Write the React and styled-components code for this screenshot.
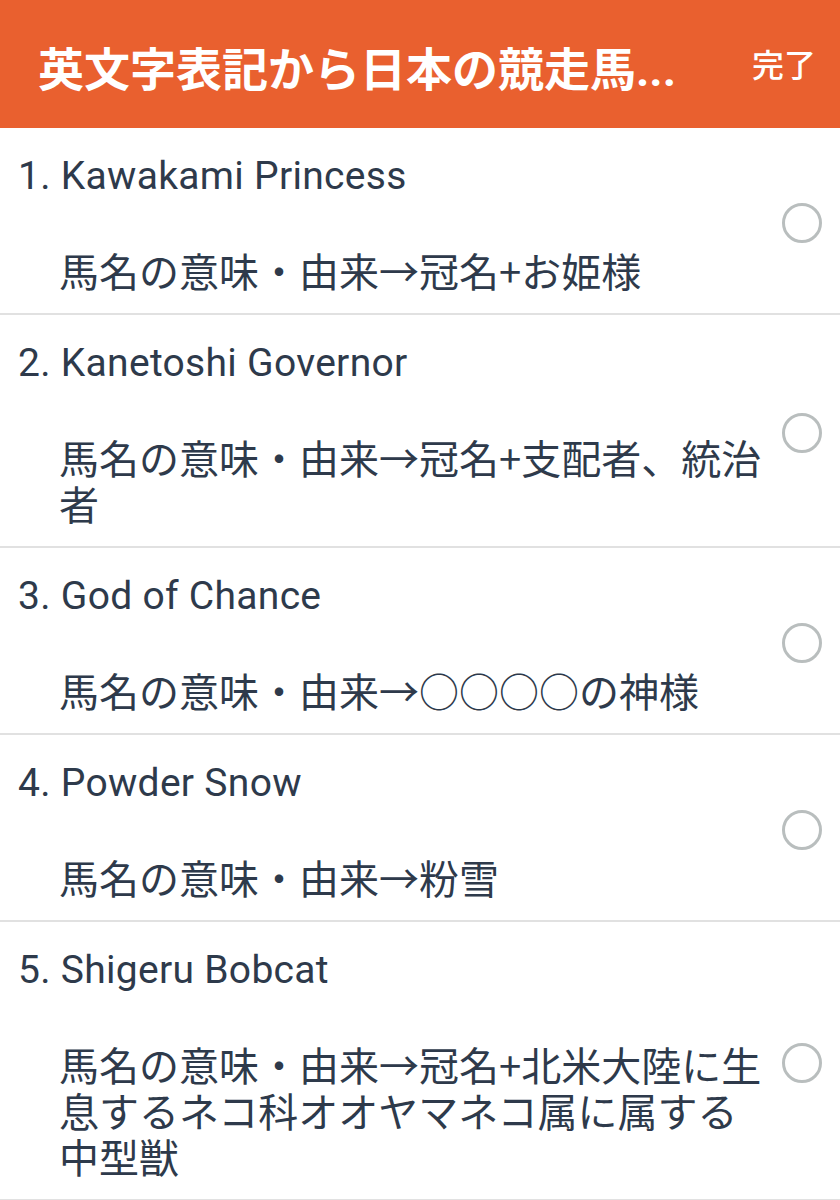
import styled, { createGlobalStyle } from "styled-components";

const GlobalStyle = createGlobalStyle`
  html, body {
    margin: 0;
    padding: 0;
    background: #ffffff;
  }
  body {
    font-family: Roboto, "Noto Sans CJK JP", sans-serif;
  }
`;

const Page = styled.div`
  width: 840px;
  min-height: 1200px;
  background: #fff;
`;

const Header = styled.header`
  height: 128px;
  background: #e9602f;
  display: flex;
  align-items: center;
  justify-content: space-between;
  padding: 0 24px 0 38px;
  box-sizing: border-box;
  color: #fff;
`;

const Title = styled.h1`
  margin: 0;
  margin-top: 4px;
  font-size: 46px;
  font-weight: 700;
  letter-spacing: 0;
  white-space: nowrap;
  font-family: Roboto, "Noto Sans CJK JP", sans-serif;
`;

const Done = styled.span`
  font-size: 32px;
  font-weight: 500;
  margin-top: -2px;
`;

const List = styled.ul`
  list-style: none;
  margin: 0;
  padding: 0;
`;

const Row = styled.li`
  display: flex;
  align-items: center;
  border-bottom: 2px solid #e1e1e1;
  padding: 24px 18px 20px 18px;
`;

const Body = styled.div`
  flex: 1;
  min-width: 0;
`;

const Name = styled.div`
  font-size: 39px;
  line-height: 48px;
  letter-spacing: 0.3px;
  color: #2e3a4b;
`;

const Meaning = styled.div`
  margin-top: 47px;
  padding-left: 41px;
  padding-right: 8px;
  font-size: 40px;
  line-height: 46px;
  color: #2e3a4b;
  font-family: "Noto Sans CJK JP", sans-serif;
`;

const Radio = styled.span`
  flex: none;
  width: 34px;
  height: 34px;
  border-radius: 50%;
  border: 3.5px solid #b9bebe;
  margin-left: 4px;
`;

const items = [
  { name: "Kawakami Princess", meaning: "馬名の意味・由来→冠名+お姫様" },
  { name: "Kanetoshi Governor", meaning: "馬名の意味・由来→冠名+支配者、統治者" },
  { name: "God of Chance", meaning: "馬名の意味・由来→○○○○の神様" },
  { name: "Powder Snow", meaning: "馬名の意味・由来→粉雪" },
  {
    name: "Shigeru Bobcat",
    meaning: "馬名の意味・由来→冠名+北米大陸に生息するネコ科オオヤマネコ属に属する中型獣",
  },
];

export default function App() {
  return (
    <Page>
      <GlobalStyle />
      <Header>
        <Title>英文字表記から日本の競走馬...</Title>
        <Done>完了</Done>
      </Header>
      <List>
        {items.map((item, i) => (
          <Row key={item.name}>
            <Body>
              <Name>
                {i + 1}. {item.name}
              </Name>
              <Meaning>{item.meaning}</Meaning>
            </Body>
            <Radio />
          </Row>
        ))}
      </List>
    </Page>
  );
}
